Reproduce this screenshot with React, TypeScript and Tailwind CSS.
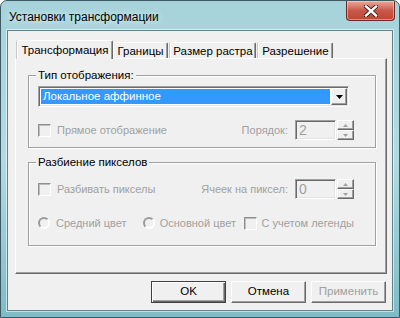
import type {ReactNode} from "react";

const raised =
	"border border-t-white border-l-white border-b-[#696969] border-r-[#696969] shadow-[inset_-1px_-1px_0_#a0a0a0]";
const sunken =
	"border border-t-[#a0a0a0] border-l-[#a0a0a0] border-b-white border-r-white shadow-[inset_1px_1px_0_#696969,inset_-1px_-1px_0_#e3e3e3]";

function CheckBox() {
	return (
		<span className="inline-block w-[13px] h-[13px] shrink-0 bg-[#f0f0f0] border border-t-[#8f8f8f] border-l-[#8f8f8f] border-b-white border-r-white shadow-[inset_1px_1px_0_#bdbdbd]" />
	);
}

function Radio() {
	return (
		<span className="inline-block w-[12px] h-[12px] shrink-0 rounded-full bg-[#f0f0f0] border-2 border-t-[#9a9a9a] border-l-[#9a9a9a] border-b-white border-r-white" />
	);
}

function Spin({value}: {value: string}) {
	return (
		<div className="flex items-center">
			<div className={`w-[41px] h-[20px] bg-[#f0f0f0] pl-[3px] leading-[18px] text-[14px] text-[#a0a0a0] ${sunken}`}>
				{value}
			</div>
			<div className="flex flex-col ml-[1px]">
				<div className={`w-[17px] h-[10px] bg-[#f0f0f0] flex items-center justify-center ${raised}`}>
					<svg width="5" height="3" viewBox="0 0 5 3">
						<path d="M2.5 0 L5 3 L0 3 Z" fill="#a0a0a0" />
					</svg>
				</div>
				<div className={`w-[17px] h-[10px] bg-[#f0f0f0] flex items-center justify-center ${raised}`}>
					<svg width="5" height="3" viewBox="0 0 5 3">
						<path d="M0 0 L5 0 L2.5 3 Z" fill="#a0a0a0" />
					</svg>
				</div>
			</div>
		</div>
	);
}

function Group({title, children, className}: {title: string; children: ReactNode; className?: string}) {
	return (
		<div
			className={`border border-[#a0a0a0] shadow-[1px_1px_0_#fff,inset_1px_1px_0_#fff] pl-[9px] ${className ?? ""}`}
		>
			<div className="-mt-[8px] ml-[-2px] px-[2px] w-fit bg-[#f0f0f0] leading-[14px] text-[11.5px] text-black">
				{title}
			</div>
			{children}
		</div>
	);
}

function Button({label, primary, disabled}: {label: string; primary?: boolean; disabled?: boolean}) {
	return (
		<div
			className={`w-[75px] h-[22px] bg-[#f0f0f0] flex items-center justify-center text-[11.5px] ${
				primary
					? "border border-[#404040] shadow-[inset_1px_1px_0_#fff,inset_-1px_-1px_0_#696969,inset_-2px_-2px_0_#a0a0a0]"
					: raised
			} ${disabled ? "text-[#a0a0a0]" : "text-black"}`}
		>
			{label}
		</div>
	);
}

export default function App() {
	const tabs = [
		{label: "Границы", w: "w-[55px]"},
		{label: "Размер растра", w: "w-[86px]"},
		{label: "Разрешение", w: "w-[75px]"},
	];

	return (
		<div
			className="w-[400px] h-[318px] flex flex-col overflow-hidden rounded-t-[7px] border border-[#3d5a64] bg-gradient-to-b from-[#a6d3db] via-[#b2dbe1] to-[#7dbcc6] text-[11px] text-black whitespace-nowrap"
			style={{fontFamily: '"Liberation Sans", Arial, sans-serif'}}
		>
			{/* title bar */}
			<div className="h-[29px] flex items-start justify-between shrink-0">
				<div className="pl-[8px] pt-[8px] text-[12px] leading-[16px] text-black [text-shadow:0_0_6px_#ffffff]">
					Установки трансформации
				</div>
				<div className="mr-[4px] w-[49px] h-[20px] rounded-b-[4px] border border-t-0 border-[#6b2b22] bg-gradient-to-b from-[#e9a99c] via-[#c9584a] to-[#c0432f] flex items-center justify-center shadow-[inset_0_0_0_1px_rgba(255,220,210,0.5)]">
					<svg width="14" height="12" viewBox="0 0 14 12">
						<path
							d="M2 1.5 L12 10.5 M12 1.5 L2 10.5"
							stroke="#3b1a14"
							strokeWidth="4.2"
							strokeLinecap="square"
						/>
						<path d="M2 1.5 L12 10.5 M12 1.5 L2 10.5" stroke="#ffffff" strokeWidth="2.4" strokeLinecap="square" />
					</svg>
				</div>
			</div>

			{/* client area */}
			<div className="mx-[6px] h-[281px] border border-[#5f828d] bg-[#f0f0f0] pl-[7px] pr-[5px] pt-[9px] shadow-[0_0_0_1px_rgba(255,255,255,0.55)]">
				{/* tabs */}
				<div className="flex items-end h-[18px] pl-[2px] text-[11.5px]">
					<div className="relative z-10 -mb-[1px] w-[96px] h-[19px] bg-[#f0f0f0] border border-b-0 border-t-white border-l-white border-r-[#696969] rounded-t-[2px] shadow-[inset_-1px_0_0_#a0a0a0,-1px_0_0_#c8c8c8] flex items-center justify-center leading-[14px]">
						Трансформация
					</div>
					{tabs.map((t) => (
						<div
							key={t.label}
							className={`${t.w} h-[16px] mr-[2px] bg-[#f0f0f0] border border-b-0 border-t-white border-l-white border-r-[#696969] rounded-t-[2px] shadow-[inset_-1px_0_0_#a0a0a0,-1px_0_0_#c8c8c8] flex items-center justify-center leading-[14px]`}
						>
							{t.label}
						</div>
					))}
				</div>

				{/* panel */}
				<div className={`h-[216px] bg-[#f0f0f0] pl-[12px] pr-[10px] pt-[16px] ${raised}`}>
					<Group title="Тип отображения:" className="pb-[7px] pr-[21px]">
						<div className={`mt-[4px] w-[311px] h-[21px] flex bg-white p-[1px] ${sunken}`}>
							<div className="flex-1 mx-[1px] my-[1px] bg-[#3399ff] text-white text-[11.5px] leading-[15px] pl-[2px]">
								Локальное аффинное
							</div>
							<div className={`w-[16px] bg-[#f0f0f0] flex items-center justify-center ${raised}`}>
								<svg width="7" height="4" viewBox="0 0 7 4">
									<path d="M0 0 L7 0 L3.5 4 Z" fill="#000" />
								</svg>
							</div>
						</div>
						<div className="mt-[13px] h-[20px] flex items-center">
							<CheckBox />
							<span className="ml-[6px] text-[#a0a0a0]">Прямое отображение</span>
							<span className="ml-auto mr-[7px] text-[#a0a0a0]">Порядок:</span>
							<Spin value="2" />
						</div>
					</Group>

					<Group title="Разбиение пикселов" className="mt-[14px] pb-[12px] pr-[21px]">
						<div className="mt-[10px] h-[20px] flex items-center">
							<CheckBox />
							<span className="ml-[6px] text-[#a0a0a0]">Разбивать пикселы</span>
							<span className="ml-auto mr-[7px] text-[#a0a0a0]">Ячеек на пиксел:</span>
							<Spin value="0" />
						</div>
						<div className="mt-[14px] h-[20px] flex items-center text-[#a0a0a0]">
							<div className="w-[108px] flex items-center">
								<Radio />
								<span className="ml-[6px]">Средний цвет</span>
							</div>
							<div className="w-[104px] flex items-center">
								<Radio />
								<span className="ml-[5px]">Основной цвет</span>
							</div>
							<div className="flex items-center">
								<CheckBox />
								<span className="ml-[5px]">С учетом легенды</span>
							</div>
						</div>
					</Group>
				</div>

				{/* buttons */}
				<div className="mt-[7px] flex justify-end gap-[5px] pr-[1px]">
					<Button label="OK" primary />
					<Button label="Отмена" />
					<Button label="Применить" disabled />
				</div>
			</div>
		</div>
	);
}
